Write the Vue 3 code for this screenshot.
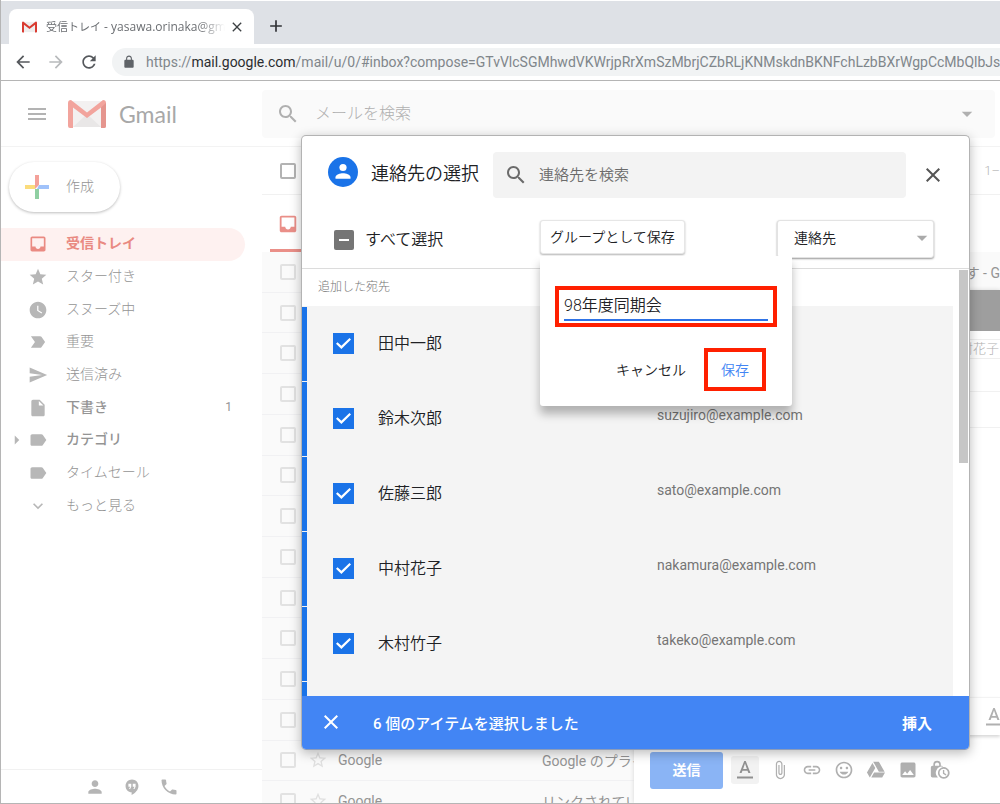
<script setup>
import { ref } from 'vue'

const icons = {
  inbox: 'M19 3H4.99c-1.11 0-1.98.89-1.98 2L3 19c0 1.1.88 2 1.99 2H19c1.1 0 2-.9 2-2V5c0-1.11-.9-2-2-2zm0 12h-4c0 1.66-1.35 3-3 3s-3-1.34-3-3H4.99V5H19v10z',
  star: 'M12 17.27L18.18 21l-1.64-7.03L22 9.24l-7.19-.61L12 2 9.19 8.63 2 9.24l5.46 4.73L5.82 21z',
  starBorder: 'M22 9.24l-7.19-.62L12 2 9.19 8.63 2 9.24l5.46 4.73L5.82 21 12 17.27 18.18 21l-1.63-7.03L22 9.24zM12 15.4l-3.76 2.27 1-4.28-3.32-2.88 4.38-.38L12 6.1l1.71 4.04 4.38.38-3.32 2.88 1 4.28L12 15.4z',
  clock: 'M12 2C6.5 2 2 6.5 2 12s4.5 10 10 10 10-4.5 10-10S17.5 2 12 2zm4.2 14.2L11 13V7h1.5v5.2l4.5 2.7-.8 1.3z',
  important: 'M3.5 18.99l11 .01c.67 0 1.27-.33 1.63-.84L20.5 12l-4.37-6.16c-.36-.51-.96-.84-1.63-.84l-11 .01L8.34 12 3.5 18.99z',
  send: 'M2.01 21L23 12 2.01 3 2 10l15 2-15 2z',
  file: 'M6 2c-1.1 0-1.99.9-1.99 2L4 20c0 1.1.89 2 1.99 2H18c1.1 0 2-.9 2-2V8l-6-6H6zm7 7V3.5L18.5 9H13z',
  label: 'M17.63 5.84C17.27 5.33 16.67 5 16 5L5 5.01C3.9 5.01 3 5.9 3 7v10c0 1.1.9 1.99 2 1.99L16 19c.67 0 1.27-.33 1.63-.84L22 12l-4.37-6.16z',
  more: 'M16.59 8.59L12 13.17 7.41 8.59 6 10l6 6 6-6z',
  person: 'M12 12c2.21 0 4-1.79 4-4s-1.79-4-4-4-4 1.79-4 4 1.79 4 4 4zm0 2c-2.67 0-8 1.34-8 4v2h16v-2c0-2.66-5.33-4-8-4z',
  hangouts: 'M12 2C7.2 2 3.4 5.8 3.4 10.500s3.600 8.500 8.100 8.500v3.500c4.500-2.200 9.100-6.800 9.100-12C20.600 5.800 16.800 2 12 2zM11 11.500L9.500 14.500H8l1.500-3H7.200V7.500H11zM16.800 11.500l-1.500 3h-1.500l1.500-3H13V7.500h3.800z',
  phone: 'M6.62 10.79c1.44 2.83 3.76 5.14 6.59 6.59l2.2-2.2c.27-.27.67-.36 1.02-.24 1.12.37 2.33.57 3.57.57.55 0 1 .45 1 1V20c0 .55-.45 1-1 1-9.39 0-17-7.61-17-17 0-.55.45-1 1-1h3.500c.55 0 1 .45 1 1 0 1.25.2 2.45.57 3.57.11.35.03.74-.25 1.02l-2.200 2.200z',
  search: 'M15.5 14h-.79l-.28-.27C15.41 12.59 16 11.11 16 9.5 16 5.91 13.09 3 9.5 3S3 5.91 3 9.5 5.91 16 9.5 16c1.61 0 3.09-.59 4.23-1.57l.27.28v.79l5 4.99L20.49 19l-4.99-5zm-6 0C7.01 14 5 11.99 5 9.5S7.01 5 9.5 5 14 7.01 14 9.5 11.99 14 9.5 14z',
  close: 'M19 6.41L17.59 5 12 10.59 6.41 5 5 6.41 10.59 12 5 17.59 6.41 19 12 13.41 17.59 19 19 17.59 13.41 12z',
  menu: 'M3 18h18v-2H3v2zm0-5h18v-2H3v2zm0-7v2h18V6H3z',
  back: 'M20 11H7.83l5.59-5.59L12 4l-8 8 8 8 1.41-1.41L7.83 13H20v-2z',
  forward: 'M12 4l-1.41 1.41L16.17 11H4v2h12.17l-5.58 5.59L12 20l8-8z',
  reload: 'M17.65 6.35C16.2 4.9 14.21 4 12 4c-4.42 0-7.99 3.58-7.99 8s3.57 8 7.99 8c3.73 0 6.84-2.55 7.73-6h-2.08c-.82 2.33-3.04 4-5.65 4-3.31 0-6-2.69-6-6s2.69-6 6-6c1.66 0 3.14.69 4.22 1.78L13 11h7V4l-2.35 2.35z',
  lock: 'M18 8h-1V6c0-2.76-2.24-5-5-5S7 3.24 7 6v2H6c-1.1 0-2 .9-2 2v10c0 1.1.9 2 2 2h12c1.1 0 2-.9 2-2V10c0-1.1-.9-2-2-2zM8.900 6c0-1.710 1.390-3.100 3.100-3.100s3.100 1.390 3.100 3.100v2H8.900z',
  plus: 'M19 13h-6v6h-2v-6H5v-2h6V5h2v6h6v2z',
  attach: 'M16.5 6v11.5c0 2.21-1.79 4-4 4s-4-1.79-4-4V5c0-1.38 1.12-2.5 2.5-2.5s2.5 1.12 2.5 2.5v10.5c0 .55-.45 1-1 1s-1-.45-1-1V6H10v9.5c0 1.38 1.12 2.5 2.5 2.5s2.5-1.12 2.5-2.5V5c0-2.21-1.79-4-4-4S7 2.79 7 5v12.5c0 3.04 2.46 5.5 5.5 5.5s5.5-2.46 5.5-5.5V6h-1.5z',
  link: 'M3.9 12c0-1.71 1.39-3.1 3.1-3.1h4V7H7c-2.76 0-5 2.24-5 5s2.24 5 5 5h4v-1.9H7c-1.71 0-3.1-1.39-3.1-3.1zM8 13h8v-2H8v2zm9-6h-4v1.9h4c1.71 0 3.1 1.39 3.1 3.1s-1.39 3.1-3.1 3.1h-4V17h4c2.76 0 5-2.24 5-5s-2.24-5-5-5z',
  emoji: 'M11.99 2C6.47 2 2 6.48 2 12s4.47 10 9.99 10C17.52 22 22 17.52 22 12S17.52 2 11.99 2zM12 20c-4.42 0-8-3.58-8-8s3.58-8 8-8 8 3.58 8 8-3.58 8-8 8zm3.500-9c.83 0 1.500-.67 1.500-1.500S16.330 8 15.500 8 14 8.670 14 9.500s.67 1.500 1.500 1.500zm-7 0c.83 0 1.500-.67 1.500-1.500S9.330 8 8.500 8 7 8.670 7 9.500 7.670 11 8.500 11zm3.500 6.500c2.330 0 4.310-1.460 5.110-3.500H6.890c.8 2.040 2.780 3.500 5.110 3.500z',
  drive: 'M7.71 3.5L1.15 15l3.43 6 6.55-11.5zM9.73 15L6.3 21h13.12l3.43-6zM22.28 14L15.42 2H8.58l6.86 12z',
  image: 'M21 19V5c0-1.1-.9-2-2-2H5c-1.1 0-2 .9-2 2v14c0 1.1.9 2 2 2h14c1.1 0 2-.9 2-2zM8.5 13.5l2.5 3.01L14.5 12l4.5 6H5l3.5-4.5z',
  format: 'M4 18.500v2h16v-2H4zm5.500-5.700h5l.9 2.200h2.100L12.750 3h-1.500L6.500 15h2.100l.9-2.200zM12 5.480L13.870 11h-3.740L12 5.480z',
  caret: 'M5 9l7 7 7-7z',
  right: 'M9 6l6 6-6 6z'
}

const folders = [
  { name: '受信トレイ', icon: 'inbox', active: true },
  { name: 'スター付き', icon: 'star' },
  { name: 'スヌーズ中', icon: 'clock' },
  { name: '重要', icon: 'important' },
  { name: '送信済み', icon: 'send' },
  { name: '下書き', icon: 'file', bold: true, count: 1 },
  { name: 'カテゴリ', icon: 'label', bold: true, expandable: true },
  { name: 'タイムセール', icon: 'label' },
  { name: 'もっと見る', icon: 'more' }
]

const mails = Array.from({ length: 14 }, () => ({}))
mails[0] = { tail: 'す - G' }
mails[12] = { sender: 'Google', subject: 'Google のプライ' }
mails[13] = { sender: 'Google', subject: 'リンクされている' }

const contacts = ref([
  { name: '田中一郎', mail: '', checked: true },
  { name: '鈴木次郎', mail: 'suzujiro@example.com', checked: true },
  { name: '佐藤三郎', mail: 'sato@example.com', checked: true },
  { name: '中村花子', mail: 'nakamura@example.com', checked: true },
  { name: '木村竹子', mail: 'takeko@example.com', checked: true }
])

const groupName = ref('98年度同期会')
const tools = [
  { icon: 'attach', label: 'ファイルを添付' },
  { icon: 'link', label: 'リンクを挿入' },
  { icon: 'emoji', label: '絵文字を挿入' },
  { icon: 'drive', label: 'ドライブを使用してファイルを挿入' },
  { icon: 'image', label: '写真を挿入' }
]
</script>

<template>
  <div class="window">
    <header class="tabstrip">
      <div class="tab">
        <svg class="favicon" viewBox="0 0 38 28" aria-hidden="true">
          <path d="M3 1h32v26H3z" fill="#eeeeee" />
          <path d="M0 3q0-3 3-3l16 13L35 0q3 0 3 3v23q0 2-2 2h-3V8L19 19 5 8v20H2q-2 0-2-2z" fill="#d93a30" />
        </svg>
        <span class="tab-title"><span class="tab-name">受信トレイ</span> - yasawa.orinaka@gmail.com</span>
        <button class="plain" aria-label="タブを閉じる"><svg class="i16" viewBox="0 0 24 24"><path :d="icons.close" /></svg></button>
      </div>
      <button class="plain new-tab" aria-label="新しいタブ"><svg class="i20" viewBox="0 0 24 24"><path :d="icons.plus" /></svg></button>
    </header>

    <div class="toolbar">
      <button class="plain" aria-label="戻る"><svg class="i20" viewBox="0 0 24 24"><path :d="icons.back" /></svg></button>
      <button class="plain dim" aria-label="進む"><svg class="i20" viewBox="0 0 24 24"><path :d="icons.forward" /></svg></button>
      <button class="plain" aria-label="再読み込み"><svg class="i20" viewBox="0 0 24 24"><path :d="icons.reload" /></svg></button>
      <div class="url">
        <svg class="i14" viewBox="0 0 24 24"><path :d="icons.lock" fill-rule="evenodd" /></svg>
        <span class="address">https://<b>mail.google.com</b>/mail/u/0/#inbox?compose=GTvVlcSGMhwdVKWrjpRrXmSzMbrjCZbRLjKNMskdnBKNFchLzbBXrWgpCcMbQlbJsb</span>
      </div>
    </div>

    <div class="gmail">
      <div class="topbar">
        <div class="brand">
          <button class="plain" aria-label="メインメニュー"><svg class="i24" viewBox="0 0 24 24"><path :d="icons.menu" /></svg></button>
          <svg class="logo" viewBox="0 0 38 28" aria-hidden="true">
            <path d="M2 1h34v26H2z" fill="#f3f1f1" />
            <path d="M5 27l14-13 14 13z" fill="#e9e7e7" />
            <path d="M0 3q0-3 3-3l16 12.500L35 0q3 0 3 3v23q0 2-2 2h-3V7.500L19 18 5 7.500V28H2q-2 0-2-2z" fill="#f2a49d" />
            <path d="M33 7.500L38 3v23q0 2-2 2h-3z" fill="#e5958e" />
          </svg>
          <span class="wordmark">Gmail</span>
        </div>
        <label class="mail-search">
          <svg class="i24" viewBox="0 0 24 24"><path :d="icons.search" /></svg>
          <input type="text" placeholder="メールを検索" aria-label="メールを検索" />
          <svg class="i18" viewBox="0 0 24 24"><path :d="icons.caret" /></svg>
        </label>
      </div>

      <div class="body">
        <aside class="side">
          <button class="compose-btn">
            <svg class="cross" viewBox="0 0 24 24" aria-hidden="true">
              <path d="M10 0h4v10l-4 4z" fill="#f4a19a" />
              <path d="M0 10h10v4H0z" fill="#fbdc7c" />
              <path d="M14 10h10v4H12z" fill="#a0c2fa" />
              <path d="M10 14h4v10h-4z" fill="#8fcfa2" />
            </svg>
            <span class="raised">作成</span>
          </button>
          <nav class="nav">
            <a v-for="f in folders" :key="f.name" href="#" class="folder" :class="{ active: f.active, bold: f.bold }">
              <span class="twist"><svg v-if="f.expandable" class="i18" viewBox="0 0 24 24"><path :d="icons.right" /></svg></span>
              <svg class="i20" viewBox="0 0 24 24"><path :d="icons[f.icon]" /></svg>
              <span class="folder-name raised">{{ f.name }}</span>
              <span v-if="f.count" class="count">{{ f.count }}</span>
            </a>
          </nav>
          <div class="side-foot">
            <svg class="i20" viewBox="0 0 24 24"><path :d="icons.person" /></svg>
            <svg class="i18" viewBox="0 0 24 24"><path :d="icons.hangouts" fill-rule="evenodd" /></svg>
            <svg class="i20" viewBox="0 0 24 24"><path :d="icons.phone" /></svg>
          </div>
        </aside>

        <main class="list">
          <div class="list-tools">
            <input type="checkbox" class="box strong" aria-label="すべてのメールを選択" />
            <span class="range">1–</span>
          </div>
          <div class="tabs"><div class="main-tab"><svg class="i22" viewBox="0 0 24 24"><path :d="icons.inbox" /></svg></div></div>
          <div class="mails">
            <div v-for="(m, i) in mails" :key="i" class="mail">
              <input type="checkbox" class="box" aria-label="メールを選択" />
              <svg class="i20 star" viewBox="0 0 24 24"><path :d="icons.starBorder" /></svg>
              <span class="sender">{{ m.sender }}</span>
              <span class="subject">{{ m.subject }}</span>
              <span class="tail">{{ m.tail }}</span>
            </div>
          </div>
        </main>
      </div>
    </div>

    <section class="draft">
      <div class="draft-head"></div>
      <div class="draft-to"><span>中村花子</span></div>
      <div class="draft-line"></div>
      <div class="draft-line second"></div>
      <div class="draft-body"></div>
      <div class="draft-format"><svg class="i24" viewBox="0 0 24 24"><path :d="icons.format" /></svg></div>
      <div class="draft-tools">
        <button class="send">送信</button>
        <button class="plain fmt" aria-label="書式設定オプション"><svg class="i24" viewBox="0 0 24 24"><path :d="icons.format" /></svg></button>
        <button v-for="t in tools" :key="t.icon" class="plain" :aria-label="t.label"><svg class="i20" viewBox="0 0 24 24"><path :d="icons[t.icon]" fill-rule="evenodd" /></svg></button>
        <button class="plain" aria-label="情報保護モード">
          <svg class="i20" viewBox="0 0 24 24">
            <path d="M3 7h1V5.500a4.500 4.500 0 0 1 9 0V7h1q1.500 0 1.500 1A7.500 7.500 0 0 0 9.500 21H3q-2 0-2-2V9q0-2 2-2zM6 7h5V5.500a2.500 2.500 0 0 0-5 0z" fill-rule="evenodd" />
            <path d="M16.500 8.500a7 7 0 1 0 .1 0zM16.500 10.500a5 5 0 1 1-.1 0z" fill-rule="evenodd" />
            <path d="M15.500 12h1.600v3.600l2.600 1.600-.8 1.300-3.400-2.100z" />
          </svg>
        </button>
      </div>
    </section>

    <section class="dialog" role="dialog" aria-label="連絡先の選択">
      <div class="dialog-head">
        <div class="title">
          <svg class="avatar" viewBox="0 0 30 30" aria-hidden="true">
            <circle cx="15" cy="15" r="15" fill="#1a73e8" />
            <circle cx="15" cy="10.500" r="3.600" fill="#fff" />
            <path d="M7.500 21.800v-1.600c0-2.700 4.800-4 7.500-4s7.500 1.300 7.500 4v1.600z" fill="#fff" />
          </svg>
          <h1>連絡先の選択</h1>
        </div>
        <label class="contact-search">
          <svg class="i24" viewBox="0 0 24 24"><path :d="icons.search" /></svg>
          <input type="text" placeholder="連絡先を検索" aria-label="連絡先を検索" />
        </label>
        <button class="plain" aria-label="閉じる"><svg class="i24" viewBox="0 0 24 24"><path :d="icons.close" /></svg></button>
      </div>

      <div class="dialog-actions">
        <label class="all"><input type="checkbox" class="mixed" /><span class="raised">すべて選択</span></label>
        <div class="group">
          <button class="group-btn">グループとして保存</button>
          <form class="popover" @submit.prevent>
            <div class="name-frame"><input v-model="groupName" type="text" aria-label="グループ名" /></div>
            <div class="popover-actions">
              <button type="button" class="cancel">キャンセル</button>
              <button type="submit" class="save">保存</button>
            </div>
          </form>
        </div>
        <div class="source">
          <select aria-label="表示する連絡先"><option>連絡先</option></select>
          <svg class="i18" viewBox="0 0 24 24"><path :d="icons.caret" /></svg>
        </div>
      </div>

      <div class="dialog-list">
        <div class="scroll">
          <h2>追加した宛先</h2>
          <div v-for="c in contacts" :key="c.name" class="contact">
            <label><input v-model="c.checked" type="checkbox" class="tick" /><span class="raised">{{ c.name }}</span></label>
            <span class="email">{{ c.mail }}</span>
          </div>
          <div class="contact"></div>
        </div>
        <div class="track"><div class="thumb"></div></div>
      </div>

      <div class="dialog-foot">
        <button class="plain" aria-label="選択を解除"><svg class="i24" viewBox="0 0 24 24"><path :d="icons.close" /></svg></button>
        <strong>6 個のアイテムを選択しました</strong>
        <button class="insert">挿入</button>
      </div>
    </section>
  </div>
</template>

<style>
body { background: #fff; }
</style>

<style scoped>
* { box-sizing: border-box; }
.window {
  position: relative;
  display: flex;
  flex-direction: column;
  height: 100vh;
  overflow: hidden;
  border: solid #b5b5b5;
  border-width: 0 0 1px 1px;
  font-family: Roboto, "Noto Sans CJK JP", sans-serif;
  font-size: 14px;
  font-weight: 300;
  color: #202124;
  background: #fff;
}
svg { fill: currentColor; display: block; flex: none; }
.i14 { width: 14px; height: 14px; }
.i16 { width: 16px; height: 16px; }
.i18 { width: 18px; height: 18px; }
.i20 { width: 20px; height: 20px; }
.i22 { width: 22px; height: 22px; }
.i24 { width: 24px; height: 24px; }
button, input, select { font: inherit; color: inherit; margin: 0; }
.plain { display: flex; padding: 0; border: 0; background: none; }
.raised { padding-bottom: 4px; }

/* browser chrome */
.tabstrip { display: flex; align-items: flex-end; height: 44px; flex: none; background: #dee1e6; border-top: 1px solid #fff; padding-left: 8px; }
.tab { display: flex; align-items: center; width: 245px; height: 35px; padding: 0 9px 0 13px; border-radius: 8px 8px 0 0; background: #fff; color: #3c4043; font: 400 12px "Open Sans", "Noto Sans CJK JP", sans-serif; }
.favicon { width: 15px; height: 12px; }
.tab-title { flex: 1; min-width: 0; margin: 0 4px 0 9px; overflow: hidden; white-space: nowrap; color: #6b6e72; mask-image: linear-gradient(to right, #000 85%, transparent); }
.tab-name { font-size: 11px; }
.new-tab { margin: 0 0 8px 12px; color: #303236; }
.toolbar { display: flex; align-items: center; gap: 13px; height: 37px; flex: none; padding-left: 12px; border-bottom: 1px solid #b5b5b5; color: #55585c; }
.dim { color: #b8babc; }
.url { display: flex; align-items: center; gap: 10px; flex: 1; min-width: 0; height: 28px; padding-left: 10px; border-radius: 14px 0 0 14px; background: #f1f3f4; font: 400 14px Roboto, sans-serif; color: #80868b; }
.url svg { color: #5f6368; }
.address { overflow: hidden; white-space: nowrap; }
.address b { font-weight: 400; color: #2b2d30; }

/* mailbox */
.gmail { display: flex; flex-direction: column; flex: 1; min-height: 0; color: #949494; }
.topbar { display: flex; align-items: center; height: 66px; flex: none; border-bottom: 1px solid #f3f3f3; padding-right: 5px; }
.brand { display: flex; align-items: center; width: 261px; flex: none; padding-left: 24px; color: #b3b3b3; }
.logo { width: 38px; height: 28px; margin: 0 13px 0 19px; }
.wordmark { font: 400 23px Lato, sans-serif; color: #a8a8a8; }
.mail-search { display: flex; align-items: center; flex: 1; min-width: 0; height: 48px; padding: 0 19px 0 14px; border-radius: 4px; background: #fafafa; color: #b0b0b0; }
.mail-search input { flex: 1; min-width: 0; margin-left: 15px; padding: 0; border: 0; outline: 0; background: none; font-size: 16px; }
input::placeholder { color: inherit; opacity: 1; }
.body { display: flex; flex: 1; min-height: 0; }
.side { display: flex; flex-direction: column; width: 261px; flex: none; }
.compose-btn { display: flex; align-items: center; gap: 17px; align-self: flex-start; height: 50px; margin: 15px 0 16px 8px; padding: 0 26px 0 16px; border: 0; border-radius: 25px; background: #fff; box-shadow: 0 1px 3px #bdbdbd; }
.cross { width: 24px; height: 24px; }
.nav { display: grid; grid-auto-rows: 1fr; min-height: 294px; }
.folder { display: flex; align-items: center; width: 244px; padding-right: 13px; border-radius: 0 17px 17px 0; color: inherit; text-decoration: none; }
.folder svg { color: #b7b7b7; }
.folder-name { flex: 1; margin-left: 18px; }
.twist { width: 27px; padding-left: 7px; }
.folder.active { background: #fef1f0; color: #e98a82; font-weight: 700; }
.folder.active svg { color: #ea8a82; }
.bold { font-weight: 500; }
.count { padding-bottom: 2px; font-size: 12px; font-weight: 400; }
.side-foot { display: flex; align-items: center; justify-content: center; gap: 18px; height: 34px; margin-top: auto; border-top: 1px solid #f1f1f1; color: #b5b5b5; }

.list { display: flex; flex-direction: column; flex: 1; min-width: 0; }
.list-tools { display: flex; align-items: center; justify-content: space-between; height: 48px; flex: none; padding-left: 18px; border-bottom: 1px solid #f1f1f1; }
.box { appearance: none; width: 16px; height: 16px; flex: none; border: 2px solid #e2e2e2; border-radius: 2px; }
.strong { border-color: #b3b3b3; }
.range { font-size: 13px; color: #b5b5b5; }
.tabs { height: 57px; flex: none; padding-left: 8px; }
.main-tab { display: flex; align-items: center; width: 200px; height: 57px; padding: 3px 0 0 7px; border-bottom: 3px solid #ea8f88; color: #ea8f88; }
.mails { display: flex; flex-direction: column; flex: 1; margin-bottom: -19px; }
.mail { display: flex; align-items: center; flex: 1; padding-left: 18px; border-bottom: 1px solid #f1f1f3; background: #fafafa; font-weight: 400; white-space: nowrap; }
.star { margin: 0 10px 0 12px; color: #e0e0e0; }
.sender { width: 204px; }
.subject { flex: 1; }

/* draft behind the dialog */
.draft { position: absolute; left: 633px; right: 0; top: 290px; bottom: 0; display: flex; flex-direction: column; background: #fff; box-shadow: 0 0 4px #d5d5d5; color: #b0b0b0; }
.draft-head { height: 41px; flex: none; background: #9e9e9e; }
.draft-to { height: 28px; flex: none; padding-top: 8px; border-bottom: 1px solid #eeeeee; text-align: right; font-size: 13px; line-height: 18px; }
.draft-to span { display: block; padding-right: 1px; border-top: 1px solid #eeeeee; }
.draft-line { height: 33px; flex: none; border-bottom: 1px solid #f1f1f1; }
.second { height: 36px; }
.draft-body { flex: 1; }
.draft-format { display: flex; align-items: center; justify-content: flex-end; height: 38px; flex: none; margin-left: 16px; border-top: 1px solid #f3f3f3; box-shadow: 0 2px 3px #d8d8d8; overflow: hidden; }
.draft-format svg { margin-right: -6px; }
.draft-tools { display: flex; align-items: center; gap: 12px; height: 68px; flex: none; padding-left: 16px; padding-top: 2px; }
.send { width: 73px; height: 37px; margin-right: -4px; padding: 0 0 3px; border: 0; border-radius: 3px; background: #8ab4f5; color: #fff; font-weight: 700; }
.fmt { padding: 2px; margin-right: -1px; border-radius: 3px; background: #f2f2f2; color: #909090; }

/* contact picker */
.dialog { position: absolute; top: 135px; right: 30px; bottom: 53px; left: 300px; display: flex; flex-direction: column; border: 1px solid #b3b3b3; border-bottom-color: #8c9cba; border-radius: 5px; background: #fff; box-shadow: 0 3px 12px rgba(0, 0, 0, 0.28); font-weight: 350; }
.dialog-head { display: flex; align-items: center; height: 77px; flex: none; padding: 0 24px 0 26px; color: #555; }
.title { display: flex; align-items: center; padding-bottom: 5px; }
.avatar { width: 30px; height: 30px; }
h1 { margin: 0 14px 0 13px; font-size: 18px; font-weight: inherit; color: #202124; white-space: nowrap; }
.contact-search { display: flex; align-items: center; flex: 1; min-width: 0; height: 46px; margin-right: 15px; padding: 0 11px; border-radius: 4px; background: #f3f3f3; color: #6b6b6b; }
.contact-search input { flex: 1; min-width: 0; margin-left: 11px; padding: 0; border: 0; outline: 0; background: none; font-size: 15px; }
.dialog-actions { display: flex; height: 56px; flex: none; padding: 7px 35px 0 32px; border-bottom: 1px solid #dcdcdc; }
.all { display: flex; align-items: center; gap: 11px; width: 206px; height: 40px; font-size: 16px; }
.mixed { display: grid; place-items: center; appearance: none; width: 20px; height: 20px; border-radius: 2px; background: #757575; }
.mixed::after { content: ""; width: 10px; height: 2px; background: #fff; }
.group { position: relative; z-index: 1; margin-right: auto; }
.group-btn { height: 34px; padding: 0 9px 2px; border: 1px solid #e6e6e6; border-radius: 3px; background: #fff; box-shadow: 0 1px 2px #b5b5b5; white-space: nowrap; }
.source { position: relative; width: 157px; height: 38px; }
.source select { appearance: none; width: 100%; height: 100%; padding: 0 16px 3px; border: 1px solid #e3e3e3; border-radius: 3px; background: #fff; box-shadow: 0 1px 2px #999; }
.source svg { position: absolute; right: 3px; top: 9px; color: #aaa; pointer-events: none; }
.popover { position: absolute; top: 36px; left: 0; width: 252px; padding: 30px 15px 15px; border-radius: 0 0 3px 3px; background: #fff; box-shadow: 0 8px 10px rgba(0, 0, 0, 0.28); clip-path: inset(0 -20px -30px -20px); }
.name-frame { height: 41px; padding: 4px 5px 2px; border: 4px solid #ff2000; }
.name-frame input { display: block; width: 100%; height: 27px; padding: 0 0 5px; border: 0; border-bottom: 2px solid #2f73e6; outline: 0; background: none; font-size: 16px; }
.popover-actions { display: flex; align-items: center; justify-content: flex-end; gap: 12px; margin: 21px 11px 0 0; }
.cancel { padding: 0 6px 1px; border: 0; background: none; }
.save { width: 62px; height: 43px; padding: 0 0 1px; border: 4px solid #ff2000; background: none; color: #4285f4; }
.dialog-list { display: flex; flex: 1; min-height: 0; }
.scroll { flex: 1; min-width: 0; overflow: hidden; }
h2 { margin: 0; padding-left: 16px; font-size: 12px; font-weight: 300; line-height: 37px; color: #757575; }
.contact { display: flex; align-items: center; height: 75px; padding-left: 31px; background: linear-gradient(#1a73e8, #1a73e8) 0 1px / 5px 100% no-repeat #f4f4f4; }
.contact label { display: flex; align-items: center; gap: 24px; width: 324px; font-size: 16px; }
.tick { appearance: none; display: grid; place-items: center; width: 21px; height: 21px; background: #1a73e8; }
.tick:checked::after { content: ""; width: 15px; height: 11px; background: #fff; clip-path: polygon(0 52%, 10% 38%, 36% 70%, 90% 0, 100% 14%, 36% 100%); }
.email { padding-bottom: 7px; font-weight: 400; font-size: 14px; color: #757575; }
.track { width: 16px; padding: 1px 1px 0 6px; }
.thumb { height: 193px; background: #c6c6c6; }
.dialog-foot { display: flex; align-items: center; height: 53px; flex: none; padding: 0 37px 1px 17px; border-radius: 0 0 4px 4px; background: #4285f4; color: #fff; font-size: 15px; }
.dialog-foot strong { margin: 0 auto 0 30px; font-weight: 500; }
.insert { padding: 0; border: 0; background: none; font-weight: 700; }
</style>
